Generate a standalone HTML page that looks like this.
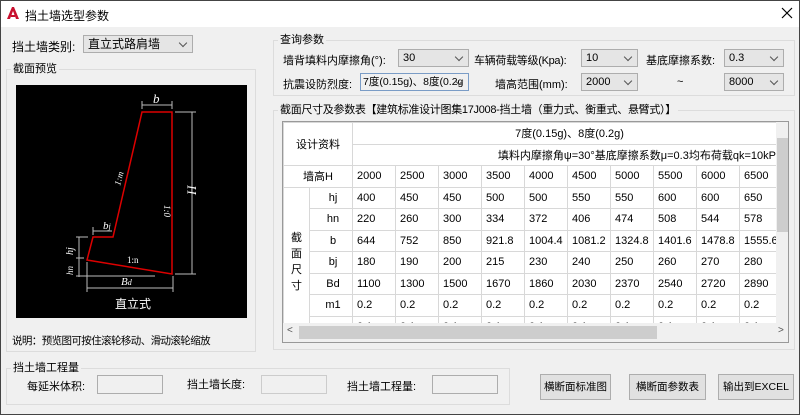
<!DOCTYPE html>
<html><head><meta charset="utf-8"><style>
*{box-sizing:border-box;margin:0;padding:0}
body{width:800px;height:415px;overflow:hidden;background:#f0f0f0;font-family:"Liberation Sans","Noto Sans CJK SC",sans-serif;font-size:11px;color:#000;position:relative}
.a{position:absolute;white-space:nowrap}
.win{position:absolute;left:0;top:0;width:800px;height:415px;border:1px solid #444}
.title{position:absolute;left:1px;top:1px;width:798px;height:26px;background:#fff}
.gb{position:absolute;border:1px solid #dcdcdc}
.gl{position:absolute;background:#f0f0f0;padding:0 2px;line-height:14px}
.cb{position:absolute;height:18px;border:1px solid #adadad;background:#e5e5e5;line-height:16px;padding-left:4px;font-size:11px}
.cb:after{content:"";position:absolute;right:6px;top:4px;width:5px;height:5px;border-right:1px solid #555;border-bottom:1px solid #555;transform:rotate(45deg)}
.inp{position:absolute;height:19px;border:1px solid #adadad;background:#f0f0f0}
.btn{position:absolute;height:26px;border:1px solid #adadad;background:#e1e1e1;text-align:center;line-height:24px;font-size:10.5px}
table{border-collapse:collapse;font-size:11px}
td{border:1px solid #d8d8d8;height:21.5px;padding-left:4px;white-space:nowrap;overflow:hidden}
</style></head><body>
<div class="win"></div>
<div class="title"></div>
<svg class="a" style="left:6px;top:6px" width="14" height="14"><path d="M1 13 L6 1 L8 1 L13 13 L10 13 L7 5 L4 13Z M5 9 H9 V11 H5Z" fill="#c8102e"/></svg>
<div class="a" style="left:25px;top:7px;font-size:12px">挡土墙选型参数</div>
<svg class="a" style="left:781px;top:7px" width="12" height="12"><path d="M1 1L11 11M11 1L1 11" stroke="#000" stroke-width="1.2"/></svg>

<div class="a" style="left:12px;top:38px;font-size:12px">挡土墙类别:</div>
<div class="cb" style="left:83px;top:35px;width:110px;font-size:12px">直立式路肩墙</div>

<div class="gb" style="left:6px;top:69px;width:250px;height:283px"></div>
<div class="gl" style="left:11px;top:62px">截面预览</div>
<div class="a" style="left:16px;top:85px;width:231px;height:233px;background:#000"></div>
<svg class="a" style="left:0;top:0" width="260" height="320">
<g stroke="#bbb" stroke-width="1" fill="none">
<path d="M142 105H172M142 101V109M172 101V109"/>
<path d="M192 112V274M175 112H196M175 274H196"/>
<path d="M87 288H173M87 262V292M173 276V292"/>
<path d="M93 231H112M93 227V235"/>
<path d="M79 237V277M76 237H88M76 258H84M76 276H155"/>
</g>
<path d="M142 112H172V274L87 260L93 237H113Z" stroke="#d00" stroke-width="1.5" fill="none"/>
<g fill="#fff" font-family="Liberation Serif,serif" font-style="italic" font-size="13">
<text x="153" y="103">b</text>
<text x="103" y="229" font-size="11">b<tspan font-size="8">j</tspan></text>
<text x="196" y="195" transform="rotate(-90 196 195)">H</text>
<text x="121" y="285" font-size="11">B<tspan font-size="8">d</tspan></text>
<text x="127" y="263" font-size="9" font-style="normal">1:n</text>
<text x="164" y="205" font-size="9" transform="rotate(90 164 205)">1:0</text>
<text x="120" y="186" font-size="9" transform="rotate(-75 120 186)">1:m</text>
<text x="73" y="255" font-size="10" transform="rotate(-90 73 255)">hj</text>
<text x="73" y="275" font-size="9" transform="rotate(-90 73 275)">hn</text>
</g>
<text x="115" y="308" fill="#fff" font-size="12" font-family="Noto Sans CJK SC,sans-serif">直立式</text>
</svg>
<div class="a" style="left:12px;top:333px;font-size:10.5px;letter-spacing:-0.6px">说明：预览图可按住滚轮移动、滑动滚轮缩放</div>

<div class="gb" style="left:273px;top:40px;width:522px;height:56px"></div>
<div class="gl" style="left:278px;top:33px">查询参数</div>
<div class="a" style="left:283px;top:52px">墙背填料内摩擦角(°):</div>
<div class="cb" style="left:398px;top:49px;width:71px">30</div>
<div class="a" style="left:474px;top:52px;letter-spacing:-0.3px">车辆荷载等级(Kpa):</div>
<div class="cb" style="left:581px;top:49px;width:57px">10</div>
<div class="a" style="left:646px;top:52px">基底摩擦系数:</div>
<div class="cb" style="left:724px;top:49px;width:60px">0.3</div>
<div class="a" style="left:283px;top:76px">抗震设防烈度:</div>
<div class="cb" style="left:360px;top:73px;width:109px;border-color:#7a9cc6;background:#f0f0f0;font-size:10.5px;padding-left:2px;overflow:hidden">7度(0.15g)、8度(0.2g</div>
<div class="a" style="left:495px;top:76px">墙高范围(mm):</div>
<div class="cb" style="left:581px;top:73px;width:57px">2000</div>
<div class="a" style="left:677px;top:76px">~</div>
<div class="cb" style="left:724px;top:73px;width:60px">8000</div>

<div class="gb" style="left:273px;top:110px;width:522px;height:240px"></div>
<div class="gl" style="left:278px;top:103px;letter-spacing:-0.3px">截面尺寸及参数表【建筑标准设计图集17J008-挡土墙（重力式、衡重式、悬臂式）】</div>
<div class="a" style="left:282px;top:121px;width:507px;height:222px;background:#fff;border:1px solid #999;overflow:hidden">
<table style="position:absolute;left:0;top:0;width:499px;table-layout:fixed">
<colgroup><col style="width:26px"><col style="width:43px"><col style="width:43px"><col style="width:43px"><col style="width:43px"><col style="width:43px"><col style="width:43px"><col style="width:43px"><col style="width:43px"><col style="width:43px"><col style="width:43px"><col style="width:43px"></colgroup>
<tr><td colspan="2" rowspan="2" style="text-align:center;padding:0">设计资料</td><td colspan="10" style="text-align:center">7度(0.15g)、8度(0.2g)</td></tr>
<tr><td colspan="10" style="text-align:right;padding-right:0">填料内摩擦角ψ=30°基底摩擦系数μ=0.3均布荷载qk=10kPa</td></tr>
<tr><td colspan="2" style="text-align:center;padding:0">墙高H</td><td>2000</td><td>2500</td><td>3000</td><td>3500</td><td>4000</td><td>4500</td><td>5000</td><td>5500</td><td>6000</td><td>6500</td></tr>
<tr><td rowspan="7" style="text-align:center;padding:0;white-space:normal;line-height:16px;vertical-align:middle">截<br>面<br>尺<br>寸</td><td style="text-align:center">hj</td><td>400</td><td>450</td><td>450</td><td>500</td><td>500</td><td>550</td><td>550</td><td>600</td><td>600</td><td>650</td></tr>
<tr><td style="text-align:center">hn</td><td>220</td><td>260</td><td>300</td><td>334</td><td>372</td><td>406</td><td>474</td><td>508</td><td>544</td><td>578</td></tr>
<tr><td style="text-align:center">b</td><td>644</td><td>752</td><td>850</td><td>921.8</td><td>1004.4</td><td>1081.2</td><td>1324.8</td><td>1401.6</td><td>1478.8</td><td>1555.6</td></tr>
<tr><td style="text-align:center">bj</td><td>180</td><td>190</td><td>200</td><td>215</td><td>230</td><td>240</td><td>250</td><td>260</td><td>270</td><td>280</td></tr>
<tr><td style="text-align:center">Bd</td><td>1100</td><td>1300</td><td>1500</td><td>1670</td><td>1860</td><td>2030</td><td>2370</td><td>2540</td><td>2720</td><td>2890</td></tr>
<tr><td style="text-align:center">m1</td><td>0.2</td><td>0.2</td><td>0.2</td><td>0.2</td><td>0.2</td><td>0.2</td><td>0.2</td><td>0.2</td><td>0.2</td><td>0.2</td></tr>
<tr><td style="text-align:center">n</td><td>0.1</td><td>0.1</td><td>0.1</td><td>0.1</td><td>0.1</td><td>0.1</td><td>0.1</td><td>0.1</td><td>0.1</td><td>0.1</td></tr>
</table>
<div class="a" style="left:493px;top:0;width:13px;height:201px;background:#f0f0f0"></div>
<div class="a" style="left:494px;top:16px;width:11px;height:94px;background:#cdcdcd"></div>
<div class="a" style="left:0;top:201px;width:506px;height:20px;background:#f0f0f0"></div>
<div class="a" style="left:16px;top:204px;width:358px;height:13px;background:#cdcdcd"></div>
<div class="a" style="left:4px;top:203px;font-size:10px;color:#555">&lt;</div>
<div class="a" style="left:495px;top:203px;font-size:10px;color:#555">&gt;</div>
</div>

<div class="gb" style="left:6px;top:368px;width:504px;height:37px"></div>
<div class="gl" style="left:11px;top:361px">挡土墙工程量</div>
<div class="a" style="left:27px;top:378px">每延米体积:</div>
<div class="inp" style="left:97px;top:375px;width:66px"></div>
<div class="a" style="left:187px;top:376px">挡土墙长度:</div>
<div class="inp" style="left:261px;top:375px;width:66px;border-color:#ccc"></div>
<div class="a" style="left:347px;top:378px">挡土墙工程量:</div>
<div class="inp" style="left:432px;top:375px;width:66px"></div>
<div class="btn" style="left:540px;top:374px;width:71px">横断面标准图</div>
<div class="btn" style="left:629px;top:374px;width:77px">横断面参数表</div>
<div class="btn" style="left:718px;top:374px;width:76px">输出到EXCEL</div>
</body></html>
